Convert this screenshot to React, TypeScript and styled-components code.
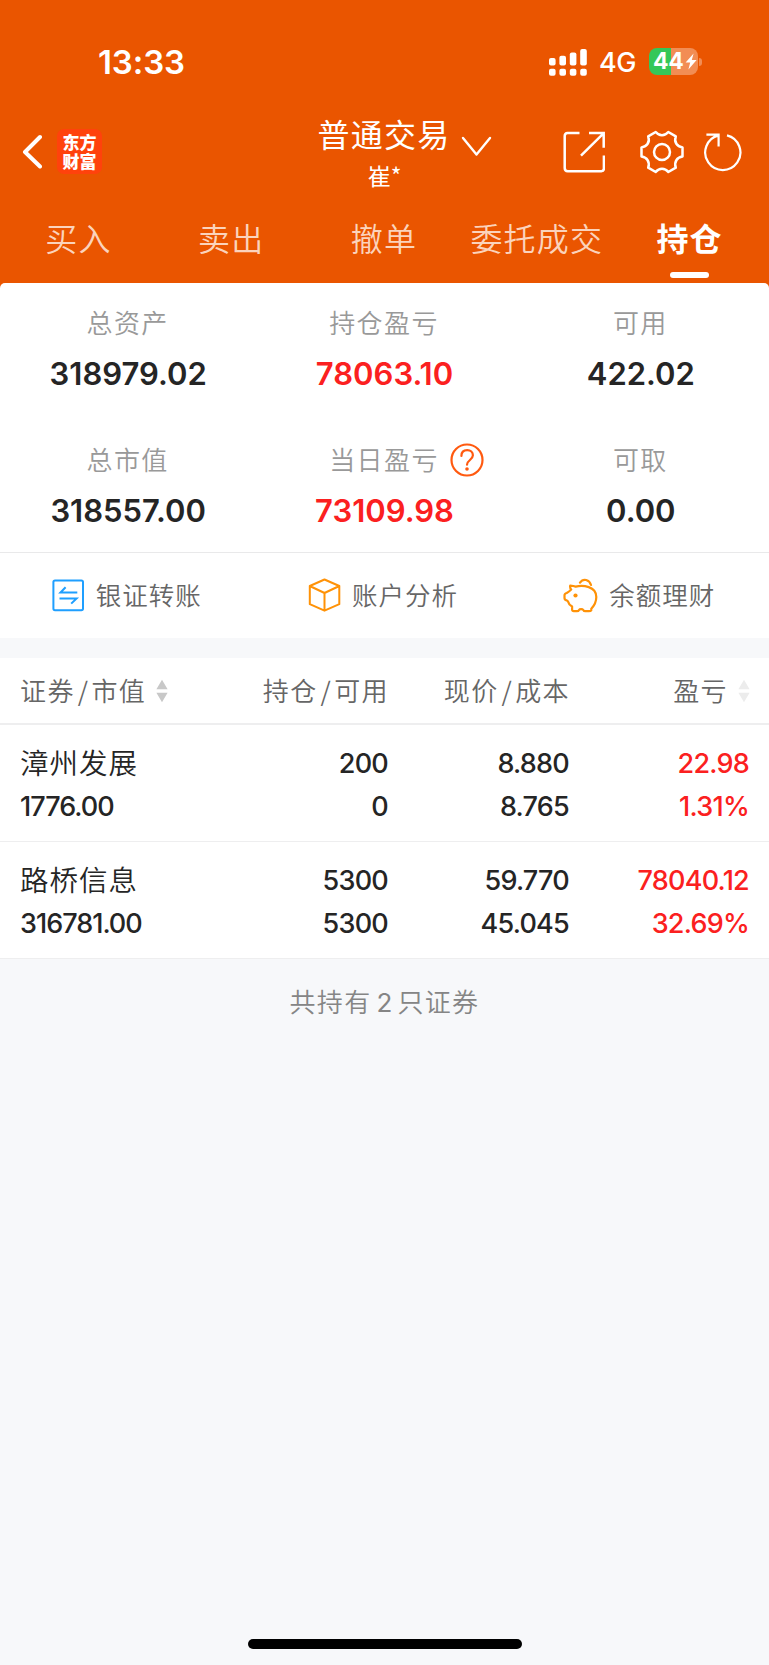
import React from "react";
import styled, { createGlobalStyle } from "styled-components";

const latin = `Inter, "Liberation Sans"`;
const cjk = `"Noto Sans CJK SC", sans-serif`;

const GlobalStyle = createGlobalStyle`
  * { box-sizing: border-box; }
  body { margin: 0; background: #f7f8fa; font-family: ${latin}, ${cjk}; }
  svg { display: block; flex: none; }
`;

const Screen = styled.div`
  width: 769px;
  height: 1665px;
  display: flex;
  flex-direction: column;
  background: #f7f8fa;
  overflow: hidden;
`;

const Header = styled.header`
  height: 288px;
  flex: none;
  background: #ea5500;
  color: #fff;
`;

const StatusBar = styled.div`
  height: 104px;
  padding: 20px 71px 0 98px;
  display: flex;
  align-items: center;
`;

const Clock = styled.div`
  flex: 1;
  font-size: 33px;
  font-weight: 600;
  letter-spacing: -0.1px;
`;

const Network = styled.span`
  margin: 1px 13px 0 12px;
  font-size: 27px;
  font-weight: 450;
  letter-spacing: -0.4px;
`;

const Battery = styled.div`
  position: relative;
  width: 49px;
  height: 27px;
  margin-top: -1px;
  border-radius: 8px;
  background: linear-gradient(90deg, #34c759 0 21.5px, #f28d54 21.5px);
  display: flex;
  align-items: center;
  gap: 1px;
  padding-left: 4px;
  font-size: 23px;
  font-weight: 700;
  line-height: 27px;
  letter-spacing: -0.3px;
`;

const BatteryTip = styled.i`
  position: absolute;
  right: -4px;
  top: 10px;
  width: 3px;
  height: 8px;
  border-radius: 0 3px 3px 0;
  background: #f28d54;
`;

const NavBar = styled.div`
  height: 96px;
  display: grid;
  grid-template-columns: 256px 1fr 256px;
`;

const NavLeft = styled.div`
  display: flex;
  align-items: center;
  gap: 15px;
  padding: 0 0 1px 22px;
`;

const Logo = styled.div`
  width: 45px;
  height: 45px;
  padding: 3px 5px 0;
  border-radius: 7px;
  background: #ff420c;
  text-align: center;
  word-break: break-all;
  font: 900 17px/19px ${cjk};
`;

const Title = styled.div`
  display: flex;
  flex-direction: column;
  align-items: center;
  padding-top: 9px;
`;

const TitleRow = styled.div`
  height: 40px;
  display: flex;
  align-items: center;
  gap: 10px;
  padding-left: 40px;
  font: 400 32px/40px ${cjk};
  letter-spacing: 1.3px;
  svg { margin-top: 27px; }
`;

const Account = styled.div`
  margin-top: 8px;
  font: 400 23px/28px ${cjk};
`;

const NavRight = styled.div`
  display: flex;
  align-items: center;
  padding: 0 0 0 50px;
`;

const IconSlot = styled.span<{ $gap: number }>`
  margin-right: ${(p) => p.$gap}px;
`;

const Tabs = styled.nav`
  height: 83px;
  padding: 0 3px 0 2px;
  display: grid;
  grid-template-columns: repeat(5, 1fr);
`;

const Tab = styled.div<{ $active?: boolean }>`
  display: flex;
  flex-direction: column;
  align-items: center;
  padding-top: 17px;
  font: ${(p) => (p.$active ? 700 : 350)} 32px/40px ${cjk};
  letter-spacing: 1.2px;
  white-space: nowrap;
  color: ${(p) => (p.$active ? "#fff" : "#fbd3bc")};
  &::after {
    content: "";
    width: 39px;
    height: 6px;
    margin-top: 15px;
    border-radius: 3px;
    background: ${(p) => (p.$active ? "#fff" : "transparent")};
  }
`;

const Summary = styled.section`
  height: 270px;
  margin-top: -5px;
  flex: none;
  border-radius: 5px 5px 0 0;
  background: #fff;
  border-bottom: 1px solid #e9e9ea;
  display: grid;
  grid-template-columns: repeat(3, 1fr);
  grid-template-rows: 137px 1fr;
`;

const Stat = styled.div`
  display: flex;
  flex-direction: column;
  align-items: center;
  padding-top: 19px;
`;

const StatLabel = styled.div`
  position: relative;
  margin-left: -1px;
  font: 350 26px/40px ${cjk};
  letter-spacing: 1.4px;
  color: #999;
  svg { position: absolute; left: 121px; top: 4px; }
`;

const StatValue = styled.div<{ $up?: boolean }>`
  margin-top: 12px;
  font-size: 31px;
  line-height: 40px;
  font-weight: 600;
  color: ${(p) => (p.$up ? "#fb2020" : "#252525")};
`;

const Actions = styled.section`
  height: 85px;
  flex: none;
  background: #fff;
  display: grid;
  grid-template-columns: repeat(3, 1fr);
`;

const Action = styled.div`
  display: flex;
  align-items: center;
  justify-content: center;
  gap: 11px;
  padding-right: 3px;
  font: 350 25.5px/40px ${cjk};
  letter-spacing: 1px;
  color: #666;
  span { margin-top: -3px; }
`;

const Holdings = styled.section`
  margin-top: 20px;
  flex: none;
  background: #fff;
`;

const Row = styled.div`
  height: 117px;
  padding: 17px 20px 0 20px;
  display: grid;
  grid-template-columns: 169px 199px 181px 180px;
  border-bottom: 1px solid #eeeeef;
  color: #252525;
`;

const HeadRow = styled(Row)`
  height: 67px;
  padding: 0 19px 0 20px;
  grid-template-columns: 170px 199px 181px 180px;
  border-bottom: 2px solid #eeeeef;
  font: 350 26px/40px ${cjk};
  letter-spacing: 1.4px;
  color: #666;
`;

const HeadCell = styled.div<{ $end?: boolean }>`
  display: flex;
  align-items: center;
  justify-content: ${(p) => (p.$end ? "flex-end" : "flex-start")};
  gap: 10px;
  white-space: nowrap;
  span { margin-top: -1px; }
  svg { margin-top: 1px; }
`;

const Slash = styled.span`
  margin: 0 2px 0 3px;
`;

const Cell = styled.div<{ $end?: boolean; $up?: boolean }>`
  text-align: ${(p) => (p.$end ? "right" : "left")};
  font-size: 27px;
  font-weight: 450;
  line-height: 43px;
  letter-spacing: ${(p) => (p.$end ? -0.75 : -1)}px;
  white-space: nowrap;
  color: ${(p) => (p.$up ? "#fb2020" : "inherit")};
`;

const Name = styled.div`
  height: 43px;
  font: 350 28.5px/40px ${cjk};
  letter-spacing: 1px;
`;

const Footnote = styled.p`
  margin: 22px 0 0;
  text-align: center;
  font: 350 26px/40px ${cjk};
  letter-spacing: 1.3px;
  word-spacing: -2px;
  color: #858585;
`;

const Count = styled.span`
  font-family: ${latin}, sans-serif;
  letter-spacing: 0;
  font-weight: 400;
`;

const HomeIndicator = styled.div`
  width: 274px;
  height: 10px;
  margin: auto auto 16px;
  border-radius: 5px;
  background: #000;
`;

const SignalIcon = () => (
  <svg width="38" height="27" viewBox="0 0 38 27" fill="#fff">
    {[0, 10.4, 20.8, 31.2].map((x, i) => {
      const top = [9, 6.7, 3.4, 0][i];
      return (
        <g key={x}>
          <rect x={x} y={top} width="6.6" height={16.4 - top} rx="2" />
          <rect x={x} y="19.8" width="6.6" height="7" rx="2" />
        </g>
      );
    })}
  </svg>
);

const BoltIcon = () => (
  <svg width="12" height="17" viewBox="0 0 12 17" fill="#fff">
    <path d="M8.6 0.4 0.6 9.6h4.6L3.4 16.6 11.6 7H6.8z" />
  </svg>
);

const BackIcon = () => (
  <svg width="20" height="36" viewBox="0 0 20 36" fill="none" stroke="#fff" strokeWidth="4" strokeLinecap="round" strokeLinejoin="round">
    <path d="M18 3 3 18l15 14.5" />
  </svg>
);

const ChevronIcon = () => (
  <svg width="31" height="21" viewBox="0 0 31 21" fill="none" stroke="#fff" strokeWidth="2.4" strokeLinecap="round" strokeLinejoin="round">
    <path d="M2 2l13.5 16.5L29 2" />
  </svg>
);

const ShareIcon = () => (
  <svg width="42" height="42" viewBox="0 0 42 42" fill="none" stroke="#fff" strokeWidth="2.5">
    <path d="M16.5 2H4.5Q1.7 2 1.7 5v32q0 3.2 3 3.2h33.6q2.6 0 2.6-2.6V24.5M26 2h14.7v14.8M40 2.8 18 24.6" />
  </svg>
);

const GearIcon = () => (
  <svg width="44" height="44" viewBox="0 0 44 44" fill="none" stroke="#fff" strokeWidth="2.5" strokeLinejoin="round">
    <path d="M15.7 2C17.5 4.2 19.5 5.2 22 5.2S26.5 4.2 28.3 2L35.8 6.4C34.6 9.5 35.2 12 36.5 14S39.5 16.8 42.5 17.4V26.6C39.5 27.2 37.8 28 36.5 30S34.6 34.5 35.8 37.6L28.3 42C26.5 39.8 24.5 38.8 22 38.8S17.5 39.8 15.7 42L8.2 37.6C9.4 34.5 8.8 32 7.5 30S4.5 27.2 1.5 26.6V17.4C4.5 16.8 6.2 16 7.5 14S9.4 9.5 8.2 6.4Z" />
    <circle cx="22" cy="22" r="8" />
  </svg>
);

const RefreshIcon = () => (
  <svg width="40" height="40" viewBox="0 0 40 40" fill="none" stroke="#fff" strokeWidth="2.2">
    <path d="M24 3.4A17.6 17.6 0 1 1 15.6 3.4M3.4 2.6H15.6V14.4" />
  </svg>
);

const HelpIcon = () => (
  <svg width="34" height="34" viewBox="0 0 34 34" fill="none" stroke="#ff5a10" strokeWidth="2.2" strokeLinecap="round">
    <circle cx="17" cy="17" r="15.5" />
    <path d="M11.4 13c0-3.8 2.3-5.8 5.8-5.8 3.4 0 5.7 2.1 5.7 5.1 0 4.5-5.9 4.9-5.9 9.4" />
    <circle cx="17" cy="26" r="1.8" fill="#ff5a10" stroke="none" />
  </svg>
);

const TransferIcon = () => (
  <svg width="33" height="33" viewBox="0 0 33 33" fill="none" stroke="#1f9fff" strokeWidth="2">
    <rect x="1.4" y="1.4" width="29.6" height="29.8" rx="1.6" />
    <path d="M25.3 13.5H8.5L13.6 8.3M7.5 19.4H24.6L19.2 24.6" />
  </svg>
);

const CubeIcon = () => (
  <svg width="33" height="35" viewBox="0 0 33 35" fill="none" stroke="#ff9207" strokeWidth="2" strokeLinejoin="round">
    <path d="M16.5 1.5 31.3 8v18.2L16.5 32.7 1.8 26.2V8zM1.8 8l14.7 7L31.3 8M16.5 15v17.7" />
  </svg>
);

const PiggyIcon = () => (
  <svg width="35" height="35" viewBox="0 0 35 35" fill="none" stroke="#ff9207" strokeWidth="2.2" strokeLinecap="round" strokeLinejoin="round">
    <path d="M7.2 7.7Q10.5 8 12.7 8.6C20 7 33.3 8.2 33.3 19c0 5-2.2 8.8-5 11.7v1.5q-.5 1-2.5 1h-3.5q-1.5 0-2-1.2-.6-.9-2.2-.9t-2.1.9q-.5 1.2-2 1.2h-3.2q-1.6 0-1.7-1.7v-3Q5.6 26.4 5 23.5q-.3-1-1.5-1.2Q1.5 22 1.5 20v-2.7q0-1.8 2.2-2.3Q6 13.7 8.2 11.5Q6.8 10 7.2 7.7ZM17 4.7c3.3-5 9.5-3 11 2.3" />
    <circle cx="12.5" cy="17.5" r="2.1" fill="#ff9207" stroke="none" />
  </svg>
);

const SortIcon = ({ color }: { color: string }) => (
  <svg width="12" height="24" viewBox="0 0 12 24" fill={color}>
    <path d="M6 .8 11.6 10.3H.4zM.4 13.7H11.6L6 23.2z" />
  </svg>
);

const stats = [
  { label: "总资产", value: "318979.02" },
  { label: "持仓盈亏", value: "78063.10", up: true },
  { label: "可用", value: "422.02" },
  { label: "总市值", value: "318557.00" },
  { label: "当日盈亏", value: "73109.98", up: true, help: true },
  { label: "可取", value: "0.00" },
];

const holdings = [
  { name: "漳州发展", market: "1776.00", held: "200", usable: "0", price: "8.880", cost: "8.765", profit: "22.98", rate: "1.31%" },
  { name: "路桥信息", market: "316781.00", held: "5300", usable: "5300", price: "59.770", cost: "45.045", profit: "78040.12", rate: "32.69%" },
];

export default function App() {
  return (
    <Screen>
      <GlobalStyle />
      <Header>
        <StatusBar>
          <Clock>13:33</Clock>
          <SignalIcon />
          <Network>4G</Network>
          <Battery>
            44
            <BoltIcon />
            <BatteryTip />
          </Battery>
        </StatusBar>
        <NavBar>
          <NavLeft>
            <BackIcon />
            <Logo>东方财富</Logo>
          </NavLeft>
          <Title>
            <TitleRow>
              普通交易
              <ChevronIcon />
            </TitleRow>
            <Account>崔*</Account>
          </Title>
          <NavRight>
            <IconSlot $gap={35}><ShareIcon /></IconSlot>
            <IconSlot $gap={19}><GearIcon /></IconSlot>
            <RefreshIcon />
          </NavRight>
        </NavBar>
        <Tabs>
          {["买入", "卖出", "撤单", "委托成交", "持仓"].map((t) => (
            <Tab key={t} $active={t === "持仓"}>{t}</Tab>
          ))}
        </Tabs>
      </Header>
      <Summary>
        {stats.map((s) => (
          <Stat key={s.label}>
            <StatLabel>
              {s.label}
              {s.help && <HelpIcon />}
            </StatLabel>
            <StatValue $up={s.up}>{s.value}</StatValue>
          </Stat>
        ))}
      </Summary>
      <Actions>
        <Action><TransferIcon /><span>银证转账</span></Action>
        <Action><CubeIcon /><span>账户分析</span></Action>
        <Action><PiggyIcon /><span>余额理财</span></Action>
      </Actions>
      <Holdings>
        <HeadRow>
          <HeadCell><span>证券<Slash>/</Slash>市值</span><SortIcon color="#c8c8c8" /></HeadCell>
          <HeadCell $end><span>持仓<Slash>/</Slash>可用</span></HeadCell>
          <HeadCell $end><span>现价<Slash>/</Slash>成本</span></HeadCell>
          <HeadCell $end><span>盈亏</span><SortIcon color="#ececec" /></HeadCell>
        </HeadRow>
        {holdings.map((h) => (
          <Row key={h.name}>
            <Cell><Name>{h.name}</Name>{h.market}</Cell>
            <Cell $end>{h.held}<br />{h.usable}</Cell>
            <Cell $end>{h.price}<br />{h.cost}</Cell>
            <Cell $end $up>{h.profit}<br />{h.rate}</Cell>
          </Row>
        ))}
      </Holdings>
      <Footnote>共持有 <Count>2</Count> 只证券</Footnote>
      <HomeIndicator />
    </Screen>
  );
}
